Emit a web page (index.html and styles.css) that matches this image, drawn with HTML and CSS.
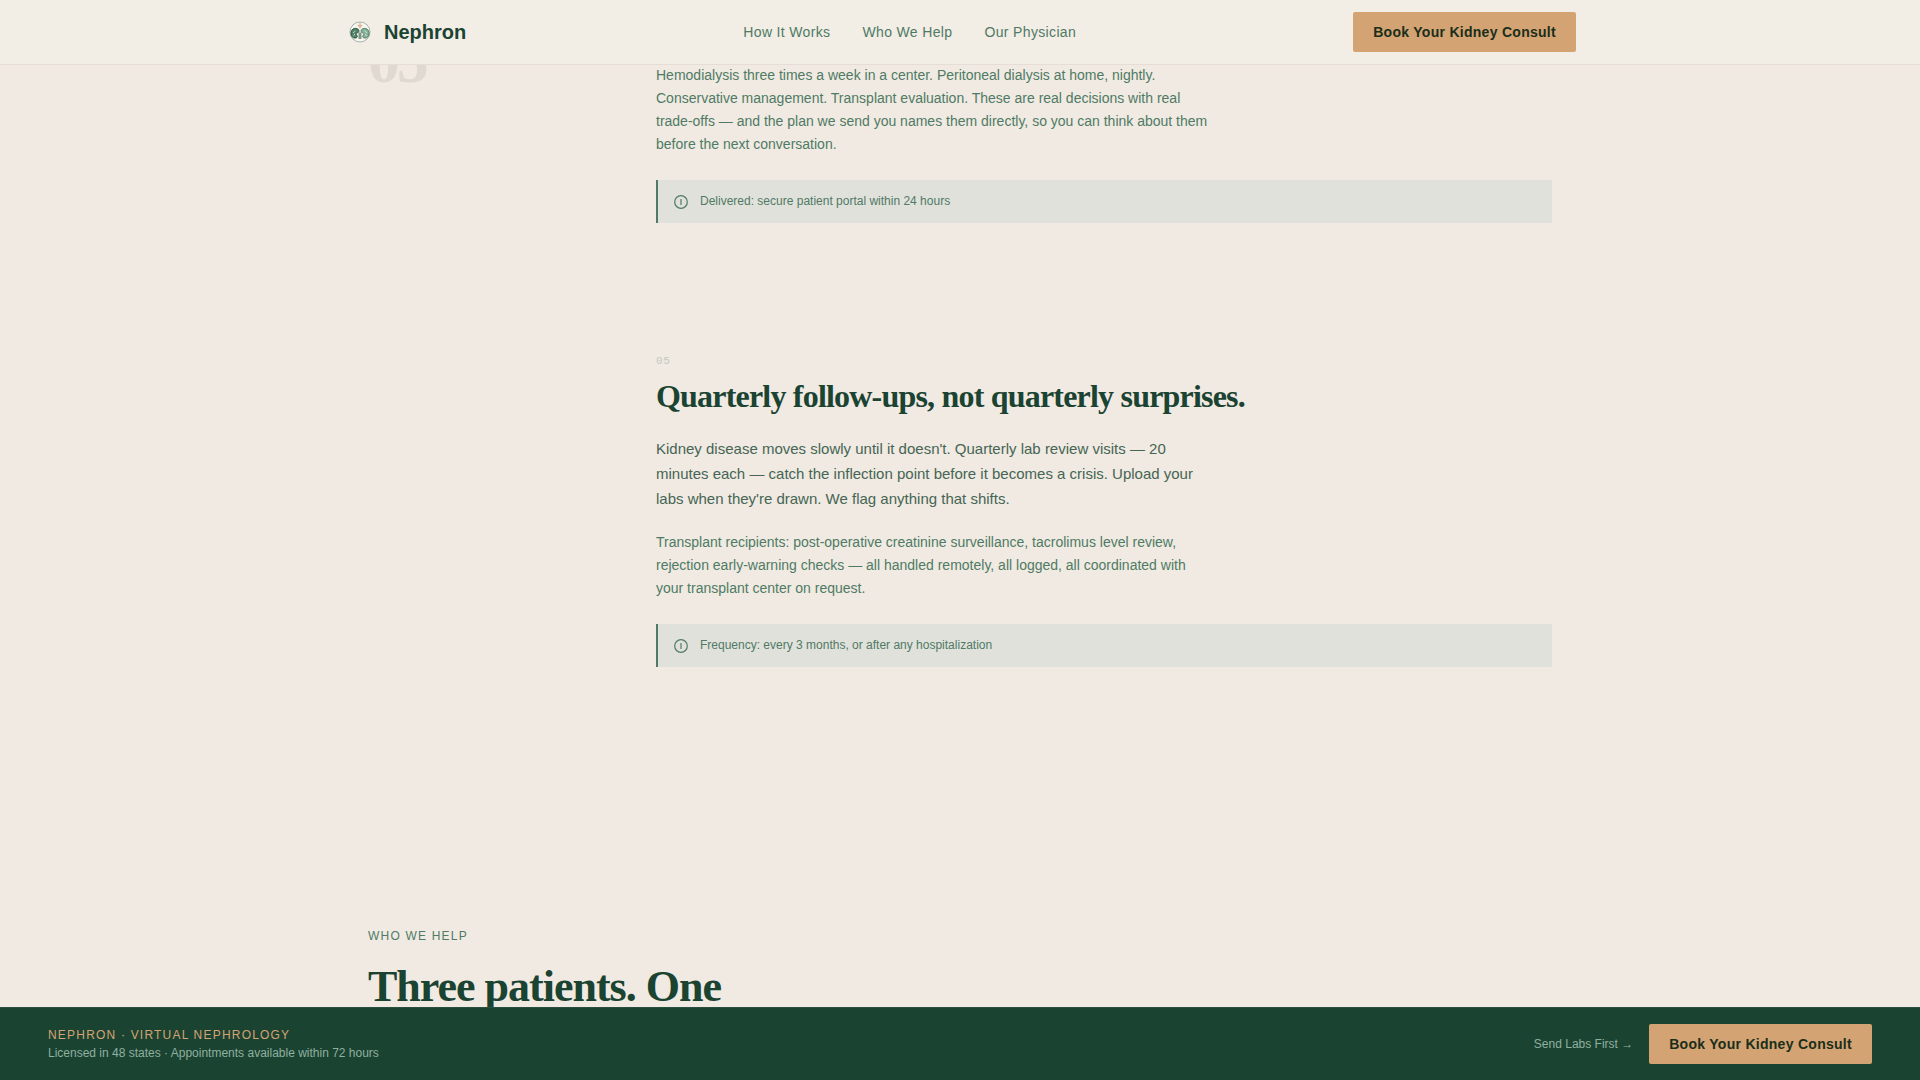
FILE: index.html
```html
<!DOCTYPE html>
<html lang="en">
  <head>
    <meta charset="UTF-8" />
    <meta name="viewport" content="width=device-width, initial-scale=1.0" />
    <title>Nephron</title>
    <link rel="stylesheet" href="styles.css">
  </head>

  <body>
    <header class="site-header">
      <div class="header-inner">
        <a class="brand" href="#">
          <svg class="brand-logo" viewBox="0 0 32 32" aria-hidden="true">
            <circle cx="16" cy="16" r="10" fill="#f8f6f0" stroke="#8fa598" stroke-width="0.8" />
            <path d="M16 6.500v6M13.800 9l2.200 2 2.200-2" fill="none" stroke="#d9b391" stroke-width="1.200" />
            <path d="M14.500 13.600C12.500 11.400 7.500 12 7 16.500c-.4 4 2.500 6.300 5 5.400 2.300-.8 1.200-2.300.4-3.200-.7-1 .1-1.800 1.100-1.900 1.400-.1 1.900-2 1-3.200z" fill="#4f8269" stroke="#1b4332" stroke-width="0.800" />
            <path d="M17.500 13.600c2-2.200 7-1.600 7.500 2.900.4 4-2.500 6.300-5 5.400-2.300-.8-1.200-2.300-.4-3.200.7-1-.1-1.800-1.100-1.900-1.400-.1-1.900-2-1-3.200z" fill="#86b29a" stroke="#3f6b55" stroke-width="0.800" />
            <path d="M9 16.500c1 .2 1.600-.4 2-1.700M9.400 19.800c.8-.4 1.200-.9 1.300-1.800M23 16.500c-1 .2-1.600-.4-2-1.700M22.600 19.800c-.8-.4-1.200-.9-1.300-1.800" fill="none" stroke="#e8efe6" stroke-width="0.800" />
            <path d="M15.200 16.500v6.500M16.800 16.500v6.500" stroke="#1b4332" stroke-width="0.800" />
          </svg>
          <span>Nephron</span>
        </a>
        <nav class="main-nav">
          <a href="#how">How It Works</a>
          <a href="#who">Who We Help</a>
          <a href="#physician">Our Physician</a>
        </nav>
        <button class="btn" type="button">Book Your Kidney Consult</button>
      </div>
    </header>

    <main class="page">
      <section class="steps" id="how">
        <div class="step-number" aria-hidden="true">05</div>
        <div class="step-list">
          <article class="step">
            <p class="detail">Hemodialysis three times a week in a center. Peritoneal dialysis at home, nightly. Conservative management. Transplant evaluation. These are real decisions with real trade-offs — and the plan we send you names them directly, so you can think about them before the next conversation.</p>
            <div class="note">
              <svg class="note-icon" viewBox="0 0 14 14" aria-hidden="true">
                <circle cx="7" cy="7" r="6.300" />
                <path d="M7 4v6" />
              </svg>
              <span>Delivered: secure patient portal within 24 hours</span>
            </div>
          </article>
          <article class="step">
            <div class="step-label">05</div>
            <h3>Quarterly follow-ups, not quarterly surprises.</h3>
            <p class="lead">Kidney disease moves slowly until it doesn't. Quarterly lab review visits — 20 minutes each — catch the inflection point before it becomes a crisis. Upload your labs when they're drawn. We flag anything that shifts.</p>
            <p class="detail">Transplant recipients: post-operative creatinine surveillance, tacrolimus level review, rejection early-warning checks — all handled remotely, all logged, all coordinated with your transplant center on request.</p>
            <div class="note">
              <svg class="note-icon" viewBox="0 0 14 14" aria-hidden="true">
                <circle cx="7" cy="7" r="6.300" />
                <path d="M7 4v6" />
              </svg>
              <span>Frequency: every 3 months, or after any hospitalization</span>
            </div>
          </article>
        </div>
      </section>

      <section class="who" id="who">
        <p class="eyebrow">Who We Help</p>
        <h2>Three patients. One</h2>
      </section>
    </main>

    <footer class="sticky-bar">
      <div class="bar-info">
        <p class="bar-title">Nephron · Virtual Nephrology</p>
        <p class="bar-text">Licensed in 48 states · Appointments available within 72 hours</p>
      </div>
      <div class="bar-actions">
        <a href="#labs">Send Labs First →</a>
        <button class="btn" type="button">Book Your Kidney Consult</button>
      </div>
    </footer>
  </body>
</html>
```
FILE: styles.css
```css
:root {
  --cream: #f0eae2;
  --header: #f2ede5;
  --green-dark: #1b4332;
  --green: #4f7a65;
  --green-text: #466555;
  --tan: #d4a373;
  --sans: "Liberation Sans", Arial, sans-serif;
  --serif: "Liberation Serif", "Times New Roman", serif;
}

* {
  box-sizing: border-box;
}

body {
  display: flex;
  flex-direction: column;
  height: 100vh;
  margin: 0;
  overflow: hidden;
  font-family: var(--sans);
  color: var(--green-dark);
  background-color: var(--cream);
}

h2,
h3,
p {
  margin: 0;
}

a {
  color: inherit;
  text-decoration: none;
}

.btn {
  height: 40px;
  padding: 0 20px;
  border: none;
  border-radius: 2px;
  background-color: var(--tan);
  color: #1a2e1a;
  font-family: var(--sans);
  font-size: 14px;
  font-weight: bold;
  letter-spacing: 0.02em;
  cursor: pointer;
}

/* Header */
.site-header {
  flex: none;
  background-color: var(--header);
  border-bottom: 1px solid #e6ded6;
}

.header-inner {
  display: flex;
  align-items: center;
  justify-content: space-between;
  max-width: 1280px;
  height: 64px;
  margin: 0 auto;
  padding: 0 24px;
}

.brand {
  display: flex;
  align-items: center;
  gap: 8px;
  font-size: 20px;
  font-weight: bold;
}

.brand-logo {
  width: 32px;
  height: 32px;
}

.main-nav {
  display: flex;
  gap: 32px;
  font-size: 14px;
  letter-spacing: 0.025em;
  color: var(--green);
}

/* Steps */
.page {
  flex: 1;
  min-height: 0;
  overflow: hidden;
}

.steps,
.who {
  max-width: 1280px;
  margin: 0 auto;
  padding: 0 48px;
}

.steps {
  display: grid;
  grid-template-columns: 240px 1fr;
  column-gap: 48px;
}

.step-number {
  margin-top: -36px;
  font-family: var(--serif);
  font-size: 64px;
  font-weight: bold;
  line-height: 64px;
  letter-spacing: -0.05em;
  color: #dfd9cf;
}

.step-list {
  margin-top: -1px;
}

.step {
  padding-bottom: 130px;
}

.step-label {
  margin-bottom: 8px;
  font-family: "Liberation Mono", monospace;
  font-size: 11px;
  line-height: 16px;
  letter-spacing: 0.05em;
  color: #c3c9be;
}

.step h3 {
  margin-bottom: 20px;
  font-family: var(--serif);
  font-size: 32px;
  line-height: 39px;
  letter-spacing: -0.025em;
}

.lead {
  max-width: 560px;
  margin-bottom: 20px;
  font-size: 15px;
  line-height: 25px;
  color: var(--green-text);
}

.detail {
  max-width: 560px;
  margin-bottom: 24px;
  font-size: 14px;
  line-height: 23px;
  color: var(--green);
}

.note {
  display: flex;
  align-items: center;
  gap: 12px;
  padding: 12px 16px;
  border-left: 2px solid var(--green);
  background-color: #e1e1db;
  font-size: 12px;
  line-height: 19px;
  color: var(--green);
}

.note-icon {
  width: 14px;
  height: 14px;
  fill: none;
  stroke: var(--green);
  stroke-width: 1.2;
}

/* Who we help */
.who {
  padding-top: 130px;
}

.eyebrow {
  margin-bottom: 16px;
  font-size: 12px;
  line-height: 18px;
  letter-spacing: 0.1em;
  text-transform: uppercase;
  color: var(--green);
}

.who h2 {
  font-family: var(--serif);
  font-size: 44px;
  line-height: 52px;
  letter-spacing: -1px;
}

/* Bottom bar */
.sticky-bar {
  display: flex;
  flex: none;
  align-items: center;
  justify-content: space-between;
  padding: 16px 48px;
  border-top: 1px solid #2a4f3e;
  background-color: var(--green-dark);
}

.bar-title {
  font-size: 12px;
  line-height: 18px;
  letter-spacing: 0.1em;
  text-transform: uppercase;
  color: var(--tan);
}

.bar-text {
  font-size: 12px;
  line-height: 18px;
  color: #8fb09f;
}

.bar-actions {
  display: flex;
  align-items: center;
  gap: 16px;
  font-size: 12px;
  color: #8fb09f;
}
```
